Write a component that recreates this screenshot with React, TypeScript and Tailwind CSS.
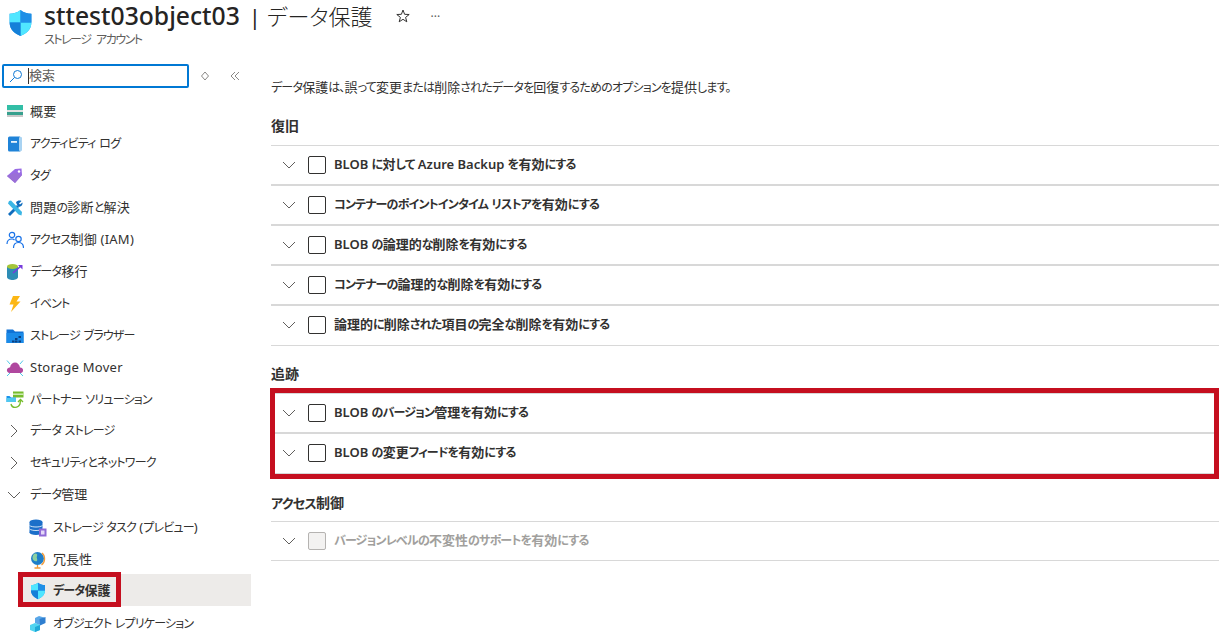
import React from "react";

const J = ({ t, k = "text-[12px] tracking-[-0.8px]" }: { t: string; k?: string }) => (
  <>
    {t.split(/([\u3040-\u30ff\u3001\u3002]+)/).map((p, i) =>
      i % 2 ? <span key={i} className={k}>{p}</span> : <span key={i}>{p}</span>
    )}
  </>
);

const Shield = ({ s = 26 }: { s?: number }) => (
  <svg width={s} height={s * 1.12} viewBox="0 0 24 27" className="shrink-0">
    <path d="M12 1 C9 3.5 5.5 4.5 1.5 4.5 V13 C1.5 20 7 24 12 26 C17 24 22.5 20 22.5 13 V4.5 C18.5 4.5 15 3.5 12 1Z" fill="#1b93eb" />
    <path d="M12 1 C9 3.5 5.5 4.5 1.5 4.5 V13 H12Z" fill="#50e6ff" />
    <path d="M12 13 H22.5 C22.5 20 17 24 12 26Z" fill="#50e6ff" />
    <path d="M12 1 C15 3.5 18.5 4.5 22.5 4.5 V13 H12Z" fill="#1f8fe6" />
    <path d="M12 13 H1.5 C1.5 20 7 24 12 26Z" fill="#1580d8" />
  </svg>
);

const I = ({ children, s = 18 }: { children: React.ReactNode; s?: number }) => (
  <svg width={s} height={s} viewBox="0 0 18 18" className="shrink-0">{children}</svg>
);

const icons: Record<string, React.ReactNode> = {
  overview: (
    <I>
      <rect x="1" y="2" width="16" height="5" fill="#32bea6" />
      <rect x="1" y="7" width="16" height="2" fill="#e3e3e3" />
      <rect x="1" y="9" width="16" height="3" fill="#37a08e" />
      <rect x="1" y="12" width="16" height="2" fill="#c9c9c9" />
    </I>
  ),
  log: (
    <I>
      <rect x="2" y="1.5" width="13" height="15" rx="1.5" fill="#1f83d8" />
      <rect x="13" y="2" width="3" height="14" rx="1" fill="#a9d3f2" />
      <rect x="5" y="6" width="6" height="1.8" fill="#e6f3fc" />
    </I>
  ),
  tag: (
    <I>
      <path d="M1 9 L9 2 L15.5 1.5 L16 8 L9 16Z" fill="#773adc" opacity="0.75" />
      <path d="M1 9 L9 16 L16 8 L9 6Z" fill="#9a6fd6" />
      <circle cx="13" cy="4.5" r="1.2" fill="#fff" />
    </I>
  ),
  tools: (
    <I>
      <path d="M2 15 L11 6 L13 8 L4 17Z" fill="#0f6cbd" />
      <path d="M10 3.5 C11 1.5 14 1 15.5 2 L13 4.5 L14 5.5 L16.5 3.5 C17 6 14.5 8.5 12 7.5Z" fill="#0f6cbd" />
      <path d="M3 2 L5 1.5 L16 13 L15.5 16.5 L12.5 15.5 L2 4.5Z" fill="#3bb6e5" />
    </I>
  ),
  iam: (
    <I>
      <circle cx="6" cy="4" r="2.7" fill="none" stroke="#1a73e8" strokeWidth="1.2" />
      <path d="M1 13 C1 9 3 8 6 8 C7 8 8 8.4 8.5 9" fill="none" stroke="#1a73e8" strokeWidth="1.2" />
      <circle cx="12.5" cy="8" r="2.7" fill="none" stroke="#1a73e8" strokeWidth="1.2" />
      <path d="M7.5 17 C7.5 13 9.5 11.5 12.5 11.5 C15.5 11.5 17.5 13 17.5 17" fill="none" stroke="#1a73e8" strokeWidth="1.2" />
    </I>
  ),
  migrate: (
    <I>
      <path d="M1 4 H12 V14 C12 16 9 17 6.5 17 C4 17 1 16 1 14Z" fill="#2d8cb5" />
      <ellipse cx="6.5" cy="3.5" rx="5.5" ry="2.5" fill="#a4c639" />
      <path d="M7 10 L15 3" stroke="#773adc" strokeWidth="1.6" />
      <path d="M12 2 H16.5 V6.5Z" fill="#773adc" />
    </I>
  ),
  event: (
    <I>
      <path d="M7 1 H14 L10.5 6.5 H14.5 L5 17 L7.5 9.5 H3.5Z" fill="#fcb714" />
    </I>
  ),
  browser: (
    <I>
      <path d="M0.5 2.5 H7 L9 4.5 H17.5 V16 H0.5Z" fill="#1073d6" />
      <rect x="0.5" y="6" width="17" height="10" fill="#1b8be8" />
      <rect x="9" y="11" width="2.5" height="2" fill="#0b3f80" />
      <rect x="12.5" y="9" width="2.5" height="2" fill="#0b3f80" />
      <rect x="6" y="13.5" width="2.5" height="2" fill="#0b3f80" />
      <rect x="9" y="13.5" width="2.5" height="2" fill="#0b3f80" />
      <rect x="12.5" y="13.5" width="2.5" height="2" fill="#0b3f80" />
    </I>
  ),
  mover: (
    <I>
      <path d="M4 14 C1.5 14 0.5 12 1 10.5 C1.5 9 3 8.5 4 8.5 C4.5 5 7 3.5 9 3.5 C11.5 3.5 13.5 5.5 14 8.5 C16 8.5 17.5 10 17 12 C16.5 13.5 15.5 14 14 14Z" fill="#b0479e" />
      <path d="M1 1.5 L4 5 M17 1.5 L14 5 M1 17 L4 14 M17 17 L14 14" stroke="#50c8e8" strokeWidth="1" />
    </I>
  ),
  partner: (
    <I>
      <rect x="7" y="0.5" width="10.5" height="6" fill="#76bc2d" />
      <rect x="7" y="2.5" width="10.5" height="1.4" fill="#d8f0c0" />
      <path d="M0.5 5 H3.5 L5 6.5 H10 V11 H0.5Z" fill="#1b93eb" />
      <path d="M0.5 7 H10 V11 H0.5Z" fill="#50c8f0" />
      <path d="M5 13 C6 17.5 12 17.5 14 13 L14.5 9" fill="none" stroke="#76bc2d" strokeWidth="1.4" />
      <path d="M12 11 L14.5 8.5 L17 11" fill="none" stroke="#76bc2d" strokeWidth="1.4" />
    </I>
  ),
  tasks: (
    <I>
      <ellipse cx="7" cy="3" rx="6.5" ry="2.4" fill="#1b6fc9" />
      <rect x="0.5" y="3" width="13" height="10.5" fill="#1b6fc9" />
      <ellipse cx="7" cy="13.5" rx="6.5" ry="2.4" fill="#1b6fc9" />
      <path d="M0.5 6.5 C3 8.5 11 8.5 13.5 6.5 M0.5 10 C3 12 11 12 13.5 10" fill="none" stroke="#cfe4f7" strokeWidth="1" />
      <rect x="10" y="9.5" width="7.5" height="8" fill="#8f6ad6" />
      <rect x="12" y="11.5" width="3.5" height="4" fill="#e4d8f7" />
    </I>
  ),
  globe: (
    <I>
      <circle cx="8.5" cy="7.5" r="6.5" fill="#1f7fc9" />
      <path d="M5 3 C7 2 9 3 8 5 C7 7 9 8 8 10 C6 11 3.5 9 3.5 7 C3.5 5 4 4 5 3Z" fill="#8bd0a0" />
      <path d="M8.5 14 V16.5 M5.5 17 H11.5 M13 2 C16.5 5 16.5 11 12.5 14" fill="none" stroke="#f29b3a" strokeWidth="1.3" />
    </I>
  ),
  replicate: (
    <I>
      <path d="M10 1 L15 2.5 V8 L10 10 L6 8 V3Z" fill="#5aa7e8" />
      <path d="M10.5 4 L16.5 2 V8 L11 10.5Z" fill="#2f7fd0" />
      <path d="M6 8 L11 10 V15 L6 17 L1 15 V10Z" fill="#50d4f0" />
      <path d="M6 12 L11 10 V15 L6 17Z" fill="#1fa9d8" />
    </I>
  ),
  shield: (
    <div className="w-[18px] flex justify-center shrink-0"><Shield s={16} /></div>
  ),
};

const Chevron = ({ dir = "down" }: { dir?: "down" | "right" }) => (
  <svg width="14" height="14" viewBox="0 0 14 14" className="shrink-0">
    <path
      d={dir === "down" ? "M1 4 L7 10 L13 4" : "M4 1 L10 7 L4 13"}
      fill="none"
      stroke="#605e5c"
      strokeWidth="1"
    />
  </svg>
);

const top = [
  ["overview", "概要"],
  ["log", "アクティビティ ログ"],
  ["tag", "タグ"],
  ["tools", "問題の診断と解決"],
  ["iam", "アクセス制御 (IAM)"],
  ["migrate", "データ移行"],
  ["event", "イベント"],
  ["browser", "ストレージ ブラウザー"],
  ["mover", "Storage Mover"],
  ["partner", "パートナー ソリューション"],
];

const NavRow = ({ icon, label }: { icon: string; label: string }) => (
  <div className="h-8 pb-[1px] flex items-center pl-[6px] gap-[6px] text-[13px] text-[#323130]">
    <div className="mt-[1px] flex shrink-0">{icons[icon]}</div>
    <span className="tracking-[0.25px]"><J t={label} /></span>
  </div>
);

const Group = ({ label, open }: { label: string; open?: boolean }) => (
  <div className="h-8 flex items-center pl-[7px] pb-[2px] gap-[9px] text-[13px] text-[#323130]">
    <Chevron dir={open ? "down" : "right"} />
    <span><J t={label} /></span>
  </div>
);

const SubRow = ({ icon, label }: { icon: string; label: string }) => (
  <div className="h-8 ml-[19px] pb-[1px] flex items-center pl-[10px] gap-[6px] text-[13px] text-[#323130]">
    <div className="mt-[1px] flex shrink-0">{icons[icon]}</div>
    <span><J t={label} /></span>
  </div>
);

const ActiveRow = ({ icon, label }: { icon: string; label: string }) => (
  <div className="relative h-8 -mt-[2px] mb-[2px] pt-[2px] ml-[19px] flex items-center pl-[10px] gap-[6px] text-[13px] text-[#323130] bg-[#edebe9] font-semibold">
    {icons[icon]}
    <span><J t={label} /></span>
    <div className="absolute left-[-1px] top-[-2px] w-[103px] h-[35px] border-[5px] border-[#c50f1f]" />
  </div>
);

const Row = ({ label, disabled, short, thin }: { label: string; disabled?: boolean; short?: boolean; thin?: boolean }) => (
  <div className={`${short ? "h-[39px]" : "h-10"} pb-[1px] flex items-center pl-[11px] border-[#d8d8d8] ${thin ? "border-b" : "border-b-2"}`}>
    <Chevron />
    <div className={`ml-[12px] w-[18px] h-[18px] rounded-[2px] border ${disabled ? "border-[#b5b3b1] bg-[#f3f2f1]" : "border-[#323130] bg-white"}`} />
    <span className={`ml-[8px] text-[13px] font-semibold ${disabled ? "text-[#a19f9d]" : "text-[#323130]"}`}><J t={label} /></span>
  </div>
);

const Heading = ({ children, className = "" }: { children: React.ReactNode; className?: string }) => (
  <div className={`h-[18px] pl-[1px] text-[14px] font-semibold text-[#323130] leading-[18px] ${className}`}>{children}</div>
);

export default function App() {
  return (
    <div className="[font-family:'Noto_Sans','Noto_Sans_CJK_JP',sans-serif] [font-feature-settings:'palt'] w-[1219px] h-[638px] overflow-hidden bg-white flex flex-col">
      <header className="h-[60px] shrink-0 flex items-start pl-[8px]">
        <div className="mt-[9px]"><Shield s={25} /></div>
        <div className="ml-[11px]">
          <div className="flex items-center h-[32px] text-[#252423]">
            <span className="text-[24.7px] leading-[32px] font-medium">sttest03object03</span>
            <span className="ml-[9px] text-[22px] leading-[32px] font-normal">|</span>
            <span className="ml-[6px] text-[22px] leading-[32px] font-light">データ保護</span>
            <svg width="16" height="16" viewBox="0 0 16 16" className="ml-[23px]">
              <path d="M8 2 L9.6 6.3 L14.2 6.5 L10.6 9.4 L11.8 13.8 L8 11.3 L4.2 13.8 L5.4 9.4 L1.8 6.5 L6.4 6.3Z" fill="none" stroke="#323130" strokeWidth="1" />
            </svg>
            <span className="ml-[19px] text-[12px] text-[#605e5c] leading-none mt-[2px]">···</span>
          </div>
          <div className="text-[12px] tracking-[-1.5px] [word-spacing:4px] leading-[14px] text-[#605e5c] mt-[1px]">ストレージ アカウント</div>
        </div>
      </header>

      <div className="flex flex-1 min-h-0">
        <aside className="w-[251px] shrink-0">
          <div className="flex items-center h-[30px] pt-[1px]">
            <div className="ml-[2px] w-[187px] h-[24px] rounded-[2px] border-2 border-[#0078d4] flex items-center pl-[5px]">
              <svg width="14" height="14" viewBox="0 0 14 14">
                <circle cx="8.5" cy="5.5" r="4" fill="none" stroke="#0f78d4" strokeWidth="1" />
                <path d="M5.5 8.5 L1 13" stroke="#0f78d4" strokeWidth="1" />
              </svg>
              <div className="ml-[5px] w-px h-[16px] bg-[#323130]" />
              <span className="text-[13px] text-[#605e5c]">検索</span>
            </div>
            <svg width="10" height="10" viewBox="0 0 10 10" className="ml-[11px]">
              <path d="M5 1 L8.5 5 L5 9 L1.5 5Z" fill="none" stroke="#8a8886" strokeWidth="1" />
            </svg>
            <svg width="10" height="10" viewBox="0 0 10 10" className="ml-[20px]">
              <path d="M5 1 L1 5 L5 9 M9 1 L5 5 L9 9" fill="none" stroke="#8a8886" strokeWidth="1" />
            </svg>
          </div>
          <div className="mt-[6px]">
            {top.map(([i, l]) => <NavRow key={l} icon={i} label={l} />)}
            <Group label="データ ストレージ" />
            <Group label="セキュリティとネットワーク" />
            <Group label="データ管理" open />
            <SubRow icon="tasks" label="ストレージ タスク (プレビュー)" />
            <SubRow icon="globe" label="冗長性" />
            <ActiveRow icon="shield" label="データ保護" />
            <SubRow icon="replicate" label="オブジェクト レプリケーション" />
          </div>
        </aside>

        <main className="flex-1 pl-[19px] text-[#323130]">
          <div className="h-[18px] pl-[1px] text-[13px] leading-[18px] mt-[18px]"><J t="データ保護は、誤って変更または削除されたデータを回復するためのオプションを提供します。" /></div>
          <Heading className="mt-[21px]">復旧</Heading>
          <div className="ml-[1px] mt-[10px] border-t border-[#d8d8d8]">
            <Row label="BLOB に対して Azure Backup を有効にする" />
            <Row label="コンテナーのポイントインタイム リストアを有効にする" />
            <Row label="BLOB の論理的な削除を有効にする" />
            <Row label="コンテナーの論理的な削除を有効にする" />
            <Row label="論理的に削除された項目の完全な削除を有効にする" thin />
          </div>
          <Heading className="mt-[19px]">追跡</Heading>
          <div className="relative mt-[5px] pt-[5px] pb-[5px]">
            <div className="ml-[1px] border-t border-[#d8d8d8]">
              <Row label="BLOB のバージョン管理を有効にする" />
              <Row label="BLOB の変更フィードを有効にする" thin />
            </div>
            <div className="absolute inset-0 border-[5px] border-[#c50f1f]" />
          </div>
          <Heading className="mt-[15px]"><J t="アクセス制御" k="text-[13px] tracking-[-0.7px]" /></Heading>
          <div className="ml-[1px] mt-[9px] border-t border-[#d8d8d8]">
            <Row label="バージョンレベルの不変性のサポートを有効にする" disabled short thin />
          </div>
        </main>
      </div>
    </div>
  );
}
